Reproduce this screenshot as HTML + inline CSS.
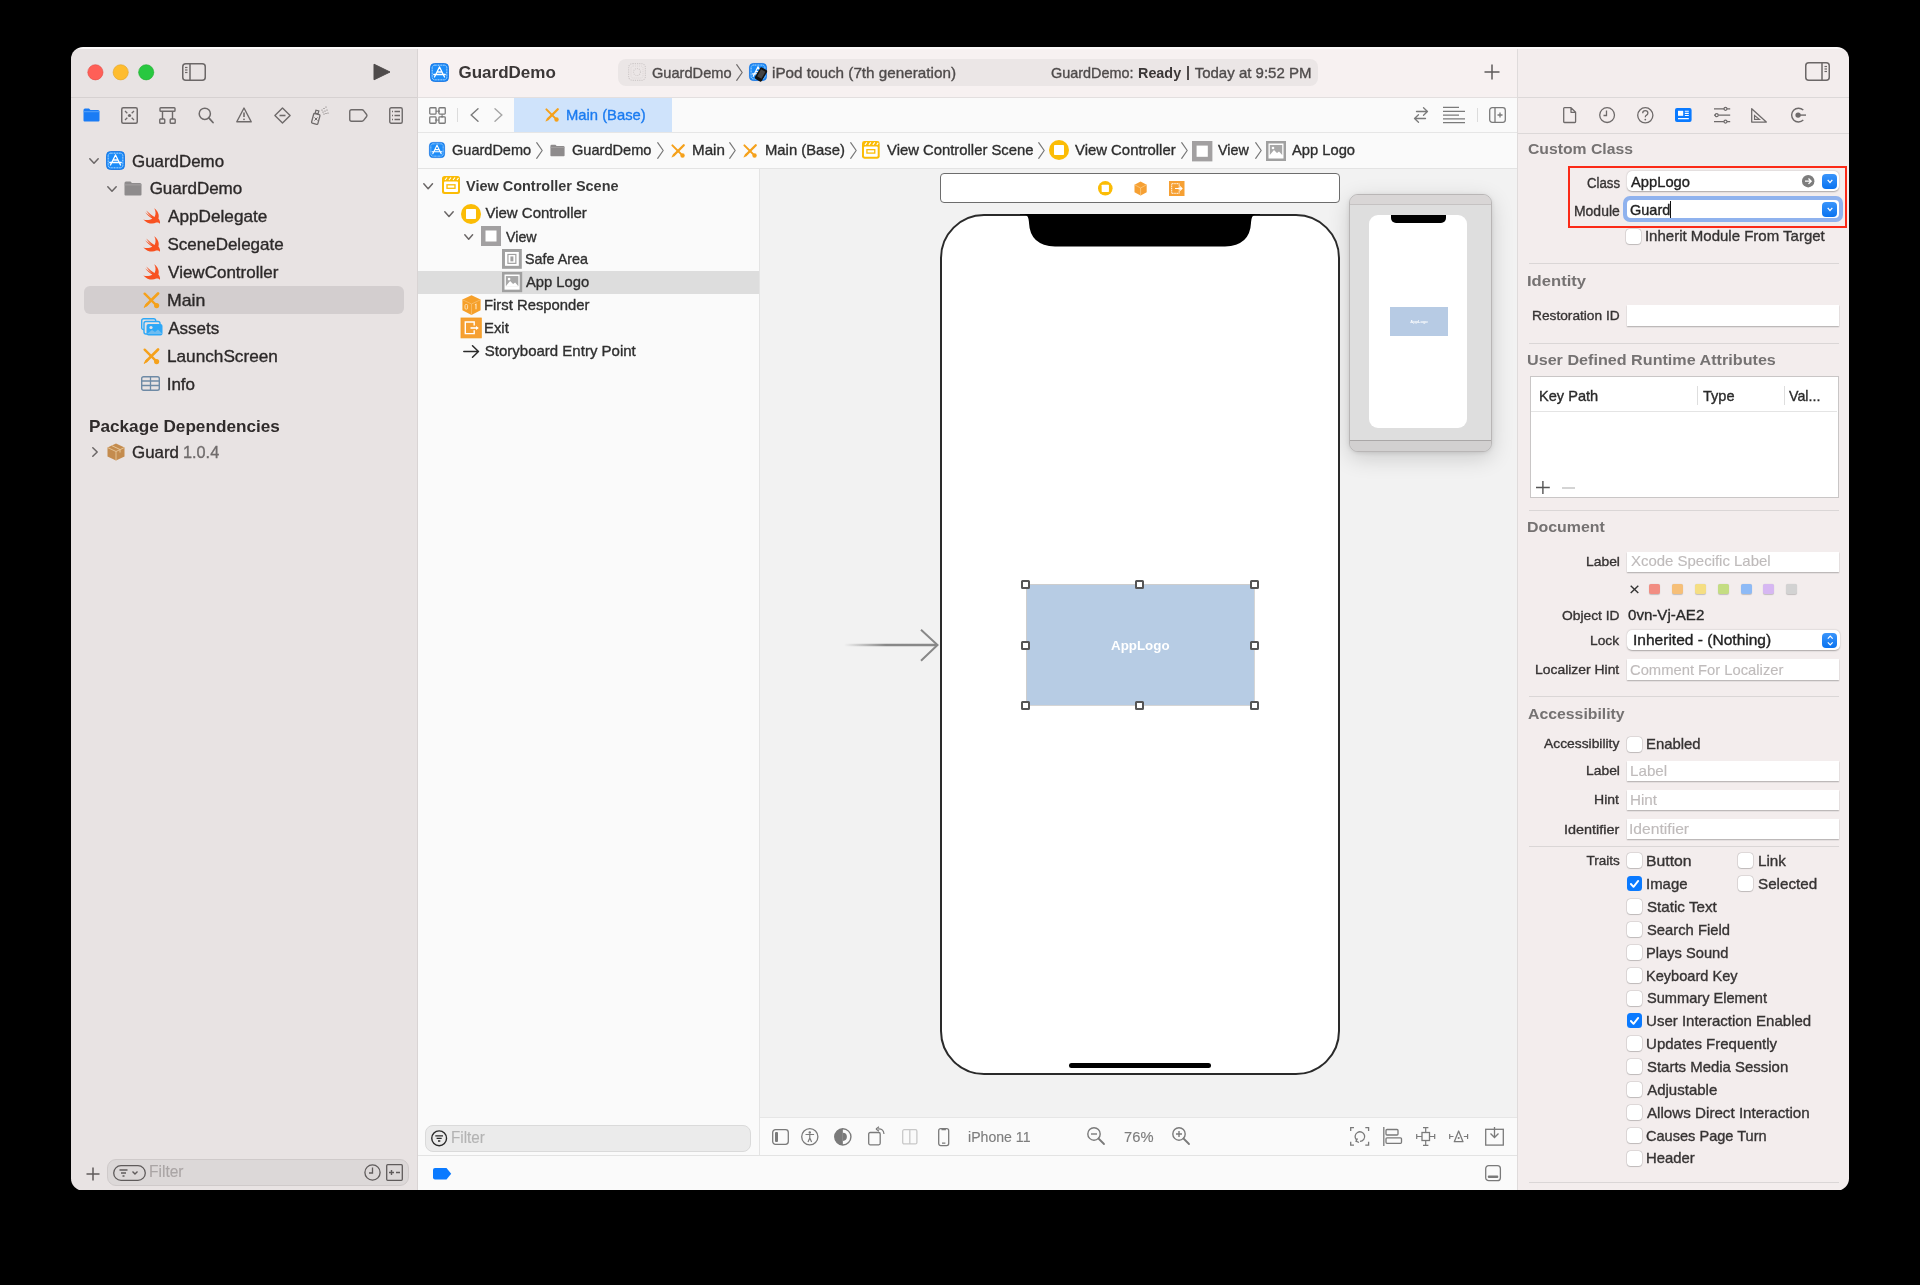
<!DOCTYPE html>
<html><head><meta charset="utf-8"><style>
html,body{margin:0;padding:0;background:#000;}
body{width:1920px;height:1285px;overflow:hidden;position:relative;font-family:"Liberation Sans", sans-serif;}
#win{position:absolute;left:0;top:0;width:1920px;height:1285px;will-change:transform;clip-path:inset(47px 71px 94.5px 71px round 12px);}
svg{overflow:visible}
</style></head><body><div id="win">
<div style="position:absolute;left:71px;top:47px;width:347px;height:1143px;background:#e8e3e3"></div><div style="position:absolute;left:418px;top:47px;width:1100px;height:50px;background:#f7f1f1"></div><div style="position:absolute;left:1518px;top:47px;width:331px;height:1143px;background:#f3eded"></div><div style="position:absolute;left:418px;top:97px;width:1100px;height:1093px;background:#fafafa"></div><div style="position:absolute;left:760px;top:168px;width:758px;height:950px;background:#f2f2f2"></div><div style="position:absolute;left:71px;top:97px;width:347px;height:1px;background:#d6d1d1"></div><div style="position:absolute;left:418px;top:97px;width:1100px;height:1px;background:#e3dfdf"></div><div style="position:absolute;left:1518px;top:97px;width:331px;height:1px;background:#dcd8d8"></div><div style="position:absolute;left:418px;top:132px;width:1100px;height:1px;background:#e6e6e6"></div><div style="position:absolute;left:1518px;top:133px;width:331px;height:1px;background:#dcd8d8"></div><div style="position:absolute;left:418px;top:168px;width:1100px;height:1px;background:#e3e3e3"></div><div style="position:absolute;left:759px;top:168px;width:1px;height:987px;background:#e4e4e4"></div><div style="position:absolute;left:760px;top:1117px;width:758px;height:1px;background:#e6e6e6"></div><div style="position:absolute;left:418px;top:1155px;width:1100px;height:1px;background:#e3e3e3"></div><div style="position:absolute;left:417px;top:47px;width:1px;height:1143px;background:#d9d4d4"></div><div style="position:absolute;left:1517px;top:47px;width:1px;height:1143px;background:#dfdbdb"></div><svg style="position:absolute;left:80px;top:57px;" width="80" height="30" viewBox="0 0 80 30"><circle cx="15.4" cy="15.3" r="7.6" fill="#ff5f57" stroke="#e2463f" stroke-width="0.6"/><circle cx="40.7" cy="15.3" r="7.6" fill="#febc2e" stroke="#e1a325" stroke-width="0.6"/><circle cx="66.2" cy="15.3" r="7.6" fill="#28c840" stroke="#1dad2b" stroke-width="0.6"/></svg><svg style="position:absolute;left:182px;top:63px;" width="24" height="18" viewBox="0 0 24 18"><rect x="0.75" y="0.75" width="22.5" height="16.5" rx="3" fill="none" stroke="#6b6767" stroke-width="1.5"/><line x1="8" y1="1" x2="8" y2="17" stroke="#6b6767" stroke-width="1.5"/><line x1="3" y1="4.5" x2="5.5" y2="4.5" stroke="#6b6767" stroke-width="1.2"/><line x1="3" y1="7" x2="5.5" y2="7" stroke="#6b6767" stroke-width="1.2"/><line x1="3" y1="9.5" x2="5.5" y2="9.5" stroke="#6b6767" stroke-width="1.2"/></svg><svg style="position:absolute;left:373px;top:63px;" width="18" height="18" viewBox="0 0 18 18"><path d="M1 1.2 L17 9 L1 16.8 Z" fill="#4f4b4b" stroke="#4f4b4b" stroke-width="1" stroke-linejoin="round"/></svg><svg style="position:absolute;left:83px;top:108px;" width="17" height="14" viewBox="0 0 17 14"><path d="M0.5 2 Q0.5 0.5 2 0.5 L6 0.5 L7.5 2 L15 2 Q16.5 2 16.5 3.5 L16.5 12.5 Q16.5 13.5 15.5 13.5 L1.5 13.5 Q0.5 13.5 0.5 12.5 Z" fill="#1a7cf5"/><rect x="0.5" y="3.2" width="16" height="1" fill="#5aa3f8"/></svg><svg style="position:absolute;left:121px;top:107px;" width="17" height="17" viewBox="0 0 17 17"><rect x="0.75" y="0.75" width="15.5" height="15.5" rx="1.5" fill="none" stroke="#6e6a6a" stroke-width="1.5"/><circle cx="8.5" cy="8.5" r="1.6" fill="#6e6a6a"/><path d="M4 4 L6.3 6.3 M13 4 L10.7 6.3 M4 13 L6.3 10.7 M13 13 L10.7 10.7" stroke="#6e6a6a" stroke-width="1.3"/></svg><svg style="position:absolute;left:159px;top:107px;" width="17" height="17" viewBox="0 0 17 17"><rect x="1" y="0.75" width="15" height="3.5" rx="0.8" fill="none" stroke="#6e6a6a" stroke-width="1.4"/><path d="M3.5 4.3 L3.5 12 M13.5 4.3 L13.5 12" stroke="#6e6a6a" stroke-width="1.4"/><rect x="0.75" y="12" width="5" height="4.2" rx="0.8" fill="none" stroke="#6e6a6a" stroke-width="1.4"/><rect x="11.2" y="12" width="5" height="4.2" rx="0.8" fill="none" stroke="#6e6a6a" stroke-width="1.4"/></svg><svg style="position:absolute;left:198px;top:107px;" width="16" height="17" viewBox="0 0 16 17"><circle cx="6.8" cy="6.8" r="5.6" fill="none" stroke="#6e6a6a" stroke-width="1.5"/><path d="M10.8 10.8 L15 15.5" stroke="#6e6a6a" stroke-width="1.8" stroke-linecap="round"/></svg><svg style="position:absolute;left:236px;top:107px;" width="16" height="16" viewBox="0 0 16 16"><path d="M8 1 L15.2 14.8 L0.8 14.8 Z" fill="none" stroke="#6e6a6a" stroke-width="1.4" stroke-linejoin="round"/><path d="M8 5.5 L8 10" stroke="#6e6a6a" stroke-width="1.6"/><circle cx="8" cy="12.3" r="0.9" fill="#6e6a6a"/></svg><svg style="position:absolute;left:274px;top:107px;" width="17" height="17" viewBox="0 0 17 17"><path d="M8.5 0.9 L16.1 8.5 L8.5 16.1 L0.9 8.5 Z" fill="none" stroke="#6e6a6a" stroke-width="1.4" stroke-linejoin="round"/><path d="M5.5 8.5 L11.5 8.5" stroke="#6e6a6a" stroke-width="1.6"/></svg><svg style="position:absolute;left:311px;top:106px;" width="19" height="19" viewBox="0 0 19 19"><rect x="1.5" y="8" width="6.5" height="10" rx="1" transform="rotate(15 5 13)" fill="none" stroke="#6e6a6a" stroke-width="1.3"/><rect x="4.5" y="4.5" width="3" height="3" transform="rotate(15 6 6)" fill="none" stroke="#6e6a6a" stroke-width="1.2"/><path d="M3.5 11.5 L6.5 14.5 M6.5 11.5 L3.5 14.5" stroke="#6e6a6a" stroke-width="1"/><g fill="#6e6a6a"><circle cx="11" cy="4" r="0.6"/><circle cx="13" cy="2.5" r="0.6"/><circle cx="15" cy="1" r="0.6"/><circle cx="12" cy="6" r="0.6"/><circle cx="14" cy="5" r="0.6"/><circle cx="16" cy="4" r="0.6"/><circle cx="13" cy="8" r="0.6"/><circle cx="15" cy="7.5" r="0.6"/><circle cx="17" cy="7" r="0.6"/></g></svg><svg style="position:absolute;left:349px;top:109px;" width="19" height="13" viewBox="0 0 19 13"><path d="M2.5 0.75 L13 0.75 Q14 0.75 14.8 1.8 L17.6 5.5 Q18.3 6.5 17.6 7.5 L14.8 11.2 Q14 12.25 13 12.25 L2.5 12.25 Q0.75 12.25 0.75 10.5 L0.75 2.5 Q0.75 0.75 2.5 0.75 Z" fill="none" stroke="#6e6a6a" stroke-width="1.4" stroke-linejoin="round"/></svg><svg style="position:absolute;left:389px;top:107px;" width="14" height="17" viewBox="0 0 14 17"><rect x="0.75" y="0.75" width="12.5" height="15.5" rx="1.5" fill="none" stroke="#6e6a6a" stroke-width="1.4"/><path d="M3 4.5 L4 4.5 M5.5 4.5 L11 4.5 M3 8.5 L4 8.5 M5.5 8.5 L11 8.5 M3 12.5 L4 12.5 M5.5 12.5 L11 12.5" stroke="#6e6a6a" stroke-width="1.4"/></svg><svg style="position:absolute;left:89px;top:158px;" width="10" height="6" viewBox="0 0 10 6"><path d="M0.8 0.8 L5.0 5.2 L9.2 0.8" fill="none" stroke="#6a6666" stroke-width="1.5" stroke-linecap="round" stroke-linejoin="round"/></svg><svg style="position:absolute;left:106px;top:151px;" width="19" height="19" viewBox="0 0 19 19"><g transform="scale(1.0)"><rect x="0.5" y="0.5" width="18" height="18" rx="4" fill="#1d8cf8" stroke="#0f6fe0" stroke-width="0.8"/><rect x="2.2" y="2.2" width="14.6" height="14.6" rx="2.6" fill="none" stroke="#fff" stroke-width="0.7" stroke-dasharray="1 0.6"/><path d="M9.5 4 L4.5 14 M9.5 4 L14.5 14 M3.8 11.5 L15.2 11.5 M7 9 L12 9" stroke="#fff" stroke-width="1.3" stroke-linecap="round" fill="none"/></g></svg><div style="position:absolute;left:131.85px;top:152.51px;font-size:17px;line-height:17px;font-weight:400;color:#2c2929;white-space:pre;-webkit-text-stroke:0.35px currentColor;transform:scaleX(0.9941);transform-origin:0 0;z-index:5">GuardDemo</div><svg style="position:absolute;left:107px;top:186px;" width="10" height="6" viewBox="0 0 10 6"><path d="M0.8 0.8 L5.0 5.2 L9.2 0.8" fill="none" stroke="#6a6666" stroke-width="1.5" stroke-linecap="round" stroke-linejoin="round"/></svg><svg style="position:absolute;left:124px;top:181px;" width="18" height="15" viewBox="0 0 18 15"><path d="M0.5 2 Q0.5 0.5 2 0.5 L6.5 0.5 L8 2 L16 2 Q17.5 2 17.5 3.5 L17.5 13.5 Q17.5 14.5 16.5 14.5 L1.5 14.5 Q0.5 14.5 0.5 13.5 Z" fill="#8e8b8c"/><rect x="0.5" y="3.5" width="17" height="0.8" fill="#a9a6a7"/></svg><div style="position:absolute;left:149.65px;top:179.51px;font-size:17px;line-height:17px;font-weight:400;color:#2c2929;white-space:pre;-webkit-text-stroke:0.35px currentColor;z-index:5">GuardDemo</div><svg style="position:absolute;left:142.5px;top:207.9px;" width="18" height="16" viewBox="0 0 18 16"><path d="M11.2 0.3 C15 3 16.6 7.2 15.4 10.6 C16.8 12.3 17.4 14.2 16.9 15.7 C15.9 14.5 14.4 14.1 13.2 14.6 C9.4 16.6 4.2 15.6 0.3 11.4 C3.6 12.4 7 12 9.3 10.4 C7 9.4 4.2 6.8 2.2 4.2 C4.8 6.4 7.3 8.1 8.8 8.9 C6.5 7 4.3 4.5 3.2 2.5 C6.2 5.3 9.7 8 11.6 9.1 C13.1 6.1 12.8 3 11.2 0.3 Z" fill="#f85222"/></svg><div style="position:absolute;left:168.20px;top:207.51px;font-size:17px;line-height:17px;font-weight:400;color:#2c2929;white-space:pre;-webkit-text-stroke:0.35px currentColor;transform:scaleX(1.0105);transform-origin:0 0;z-index:5">AppDelegate</div><svg style="position:absolute;left:142.5px;top:235.9px;" width="18" height="16" viewBox="0 0 18 16"><path d="M11.2 0.3 C15 3 16.6 7.2 15.4 10.6 C16.8 12.3 17.4 14.2 16.9 15.7 C15.9 14.5 14.4 14.1 13.2 14.6 C9.4 16.6 4.2 15.6 0.3 11.4 C3.6 12.4 7 12 9.3 10.4 C7 9.4 4.2 6.8 2.2 4.2 C4.8 6.4 7.3 8.1 8.8 8.9 C6.5 7 4.3 4.5 3.2 2.5 C6.2 5.3 9.7 8 11.6 9.1 C13.1 6.1 12.8 3 11.2 0.3 Z" fill="#f85222"/></svg><div style="position:absolute;left:167.44px;top:235.51px;font-size:17px;line-height:17px;font-weight:400;color:#2c2929;white-space:pre;-webkit-text-stroke:0.35px currentColor;z-index:5">SceneDelegate</div><svg style="position:absolute;left:142.5px;top:263.9px;" width="18" height="16" viewBox="0 0 18 16"><path d="M11.2 0.3 C15 3 16.6 7.2 15.4 10.6 C16.8 12.3 17.4 14.2 16.9 15.7 C15.9 14.5 14.4 14.1 13.2 14.6 C9.4 16.6 4.2 15.6 0.3 11.4 C3.6 12.4 7 12 9.3 10.4 C7 9.4 4.2 6.8 2.2 4.2 C4.8 6.4 7.3 8.1 8.8 8.9 C6.5 7 4.3 4.5 3.2 2.5 C6.2 5.3 9.7 8 11.6 9.1 C13.1 6.1 12.8 3 11.2 0.3 Z" fill="#f85222"/></svg><div style="position:absolute;left:168.11px;top:263.51px;font-size:17px;line-height:17px;font-weight:400;color:#2c2929;white-space:pre;-webkit-text-stroke:0.35px currentColor;z-index:5">ViewController</div><div style="position:absolute;left:84px;top:286px;width:320px;height:28px;background:#d3cecf;border-radius:6px"></div><svg style="position:absolute;left:143px;top:292px;" width="16.5" height="16.5" viewBox="0 0 16.5 16.5"><g transform="scale(1.03125)"><path d="M1.6 1.6 L11.6 11.6" stroke="#f5a11b" stroke-width="2.3" stroke-linecap="round"/><circle cx="13.2" cy="13.2" r="2.5" fill="#f5a11b"/><path d="M14.6 1.4 L3 13" stroke="#f5a11b" stroke-width="2.6" stroke-linecap="round"/><path d="M3.9 11.2 L1 15 L4.8 12.1 Z" fill="#f5a11b" stroke="#f5a11b" stroke-width="1"/></g></svg><div style="position:absolute;left:166.79px;top:292.21px;font-size:17px;line-height:17px;font-weight:400;color:#2c2929;white-space:pre;-webkit-text-stroke:0.35px currentColor;transform:scaleX(1.0399);transform-origin:0 0;z-index:5">Main</div><svg style="position:absolute;left:141px;top:318px;" width="22" height="18" viewBox="0 0 22 18"><rect x="0.7" y="0.7" width="14" height="11" rx="2" fill="none" stroke="#2ea8f7" stroke-width="1.4"/><rect x="3" y="3.5" width="16" height="12.5" rx="2" fill="#e8e3e3" stroke="#2ea8f7" stroke-width="1.4"/><rect x="5.5" y="6" width="16" height="11.5" rx="2" fill="#2ea8f7"/><circle cx="10" cy="9.5" r="1.6" fill="#e8e3e3"/><path d="M6 16 L11 12 L14 14 L17 11.5 L21.5 16 Z" fill="#e8e3e3" opacity="0.35"/></svg><div style="position:absolute;left:168.20px;top:319.61px;font-size:17px;line-height:17px;font-weight:400;color:#2c2929;white-space:pre;-webkit-text-stroke:0.35px currentColor;z-index:5">Assets</div><svg style="position:absolute;left:143px;top:348px;" width="16.5" height="16.5" viewBox="0 0 16.5 16.5"><g transform="scale(1.03125)"><path d="M1.6 1.6 L11.6 11.6" stroke="#f5a11b" stroke-width="2.3" stroke-linecap="round"/><circle cx="13.2" cy="13.2" r="2.5" fill="#f5a11b"/><path d="M14.6 1.4 L3 13" stroke="#f5a11b" stroke-width="2.6" stroke-linecap="round"/><path d="M3.9 11.2 L1 15 L4.8 12.1 Z" fill="#f5a11b" stroke="#f5a11b" stroke-width="1"/></g></svg><div style="position:absolute;left:166.82px;top:347.51px;font-size:17px;line-height:17px;font-weight:400;color:#2c2929;white-space:pre;-webkit-text-stroke:0.35px currentColor;transform:scaleX(1.0113);transform-origin:0 0;z-index:5">LaunchScreen</div><svg style="position:absolute;left:141px;top:376px;" width="19" height="15" viewBox="0 0 19 15"><rect x="0.7" y="0.7" width="17.6" height="13.6" rx="1.8" fill="none" stroke="#6e8aa5" stroke-width="1.4"/><path d="M1 5 L18 5 M1 9.5 L18 9.5 M9.5 1 L9.5 14" stroke="#6e8aa5" stroke-width="1.3"/></svg><div style="position:absolute;left:166.67px;top:375.91px;font-size:17px;line-height:17px;font-weight:400;color:#2c2929;white-space:pre;-webkit-text-stroke:0.35px currentColor;z-index:5">Info</div><div style="position:absolute;left:88.58px;top:417.91px;font-size:17px;line-height:17px;font-weight:700;color:#2f2b2b;white-space:pre;transform:scaleX(1.0098);transform-origin:0 0;z-index:5">Package Dependencies</div><svg style="position:absolute;left:92px;top:447px;" width="6" height="10" viewBox="0 0 6 10"><path d="M0.8 0.8 L5.2 5.0 L0.8 9.2" fill="none" stroke="#6a6666" stroke-width="1.5" stroke-linecap="round" stroke-linejoin="round"/></svg><svg style="position:absolute;left:107px;top:443px;" width="18" height="18" viewBox="0 0 18 18"><path d="M9 0.5 L17.5 4.5 L17.5 13.5 L9 17.5 L0.5 13.5 L0.5 4.5 Z" fill="#c48c4e"/><path d="M0.5 4.5 L9 8.5 L17.5 4.5 M9 8.5 L9 17.5" stroke="#e8c79a" stroke-width="0.9" fill="none"/><path d="M4.5 2.5 L13 6.5 L13 9.5" stroke="#e8c79a" stroke-width="1" fill="none"/></svg><div style="position:absolute;left:131.96px;top:443.61px;font-size:17px;line-height:17px;font-weight:400;color:#2c2929;white-space:pre;-webkit-text-stroke:0.35px currentColor;transform:scaleX(0.9933);transform-origin:0 0;z-index:5">Guard</div><div style="position:absolute;left:183.28px;top:443.91px;font-size:17px;line-height:17px;font-weight:400;color:#706c6c;white-space:pre;-webkit-text-stroke:0.35px currentColor;transform:scaleX(0.9573);transform-origin:0 0;z-index:5">1.0.4</div><svg style="position:absolute;left:86px;top:1167px;" width="14" height="14" viewBox="0 0 14 14"><path d="M7 0.5 L7 13.5 M0.5 7 L13.5 7" stroke="#5f5b5b" stroke-width="1.5"/></svg><div style="position:absolute;left:107px;top:1159px;width:302px;height:27px;background:#dcd8d8;border:1px solid #cfcaca;border-radius:9px;box-sizing:border-box"></div><svg style="position:absolute;left:113px;top:1165px;" width="33" height="16" viewBox="0 0 33 16"><rect x="0.7" y="0.7" width="31.6" height="14.6" rx="7.3" fill="none" stroke="#5f5b5b" stroke-width="1.3"/><path d="M6.5 5 L14.5 5 M8 8 L13 8 M9.5 11 L11.5 11" stroke="#5f5b5b" stroke-width="1.3"/><path d="M19.5 6.5 L22 9 L24.5 6.5" fill="none" stroke="#5f5b5b" stroke-width="1.4"/></svg><div style="position:absolute;left:148.86px;top:1164.15px;font-size:16px;line-height:16px;font-weight:400;color:#aaa5a5;white-space:pre;-webkit-text-stroke:0.15px currentColor;transform:scaleX(0.9706);transform-origin:0 0;z-index:5">Filter</div><svg style="position:absolute;left:364px;top:1164px;" width="17" height="17" viewBox="0 0 17 17"><circle cx="8.5" cy="8.5" r="7.6" fill="none" stroke="#5f5b5b" stroke-width="1.3"/><path d="M8.5 3.5 L8.5 9 L5 9" fill="none" stroke="#5f5b5b" stroke-width="1.3"/></svg><svg style="position:absolute;left:386px;top:1164px;" width="17" height="17" viewBox="0 0 17 17"><rect x="0.7" y="0.7" width="15.6" height="15.6" rx="1" fill="none" stroke="#5f5b5b" stroke-width="1.3"/><path d="M3 8.5 L8 8.5 M5.5 6 L5.5 11 M10 8.5 L14 8.5" stroke="#5f5b5b" stroke-width="1.4"/></svg><svg style="position:absolute;left:430px;top:63px;" width="19" height="19" viewBox="0 0 19 19"><g transform="scale(1.0)"><rect x="0.5" y="0.5" width="18" height="18" rx="4" fill="#1d8cf8" stroke="#0f6fe0" stroke-width="0.8"/><rect x="2.2" y="2.2" width="14.6" height="14.6" rx="2.6" fill="none" stroke="#fff" stroke-width="0.7" stroke-dasharray="1 0.6"/><path d="M9.5 4 L4.5 14 M9.5 4 L14.5 14 M3.8 11.5 L15.2 11.5 M7 9 L12 9" stroke="#fff" stroke-width="1.3" stroke-linecap="round" fill="none"/></g></svg><div style="position:absolute;left:458.52px;top:64.31px;font-size:17px;line-height:17px;font-weight:700;color:#3b3737;white-space:pre;z-index:5">GuardDemo</div><div style="position:absolute;left:618px;top:59px;width:700px;height:27px;background:#ebe6e6;border-radius:8px"></div><svg style="position:absolute;left:628px;top:63px;" width="18" height="18" viewBox="0 0 18 18"><rect x="0.6" y="0.6" width="16.8" height="16.8" rx="4" fill="none" stroke="#cfcaca" stroke-width="1.1" stroke-dasharray="1.2 1"/><circle cx="9" cy="9" r="3.5" fill="none" stroke="#cfcaca" stroke-width="1.1" stroke-dasharray="1 1"/><rect x="3" y="3" width="12" height="12" rx="2" fill="none" stroke="#d8d3d3" stroke-width="0.8" stroke-dasharray="1 1"/></svg><div style="position:absolute;left:651.97px;top:65.00px;font-size:15px;line-height:15px;font-weight:400;color:#4f4b4b;white-space:pre;-webkit-text-stroke:0.35px currentColor;transform:scaleX(0.9735);transform-origin:0 0;z-index:5">GuardDemo</div><svg style="position:absolute;left:736px;top:64px;" width="7" height="17" viewBox="0 0 7 17"><path d="M0.7 0.7 L6.2 8.5 L0.7 16.3" fill="none" stroke="#6f6b6b" stroke-width="1.2" stroke-linecap="round" stroke-linejoin="round"/></svg><svg style="position:absolute;left:749px;top:63px;" width="18" height="18" viewBox="0 0 18 18"><g transform="scale(0.9473684210526315)"><rect x="0.5" y="0.5" width="18" height="18" rx="4" fill="#1d8cf8" stroke="#0f6fe0" stroke-width="0.8"/><rect x="2.2" y="2.2" width="14.6" height="14.6" rx="2.6" fill="none" stroke="#fff" stroke-width="0.7" stroke-dasharray="1 0.6"/><path d="M9.5 4 L4.5 14 M9.5 4 L14.5 14 M3.8 11.5 L15.2 11.5 M7 9 L12 9" stroke="#fff" stroke-width="1.3" stroke-linecap="round" fill="none"/></g></svg><svg style="position:absolute;left:754px;top:67px;" width="14" height="16" viewBox="0 0 14 16"><rect x="3" y="1" width="8" height="13" rx="1.5" transform="rotate(30 7 7.5)" fill="#111"/><rect x="4.5" y="3" width="5" height="8" transform="rotate(30 7 7.5)" fill="#444"/></svg><div style="position:absolute;left:771.91px;top:65.00px;font-size:15px;line-height:15px;font-weight:400;color:#4f4b4b;white-space:pre;-webkit-text-stroke:0.35px currentColor;transform:scaleX(1.0166);transform-origin:0 0;z-index:5">iPod touch (7th generation)</div><div style="position:absolute;left:1050.78px;top:65.00px;font-size:15px;line-height:15px;font-weight:400;color:#4f4b4b;white-space:pre;-webkit-text-stroke:0.35px currentColor;transform:scaleX(0.9609);transform-origin:0 0;z-index:5">GuardDemo:</div><div style="position:absolute;left:1137.97px;top:65.00px;font-size:15px;line-height:15px;font-weight:700;color:#3b3737;white-space:pre;transform:scaleX(0.9579);transform-origin:0 0;z-index:5">Ready</div><div style="position:absolute;left:1187.2px;top:65.5px;width:1.4px;height:14px;background:#4f4b4b"></div><div style="position:absolute;left:1194.70px;top:65.00px;font-size:15px;line-height:15px;font-weight:400;color:#4f4b4b;white-space:pre;-webkit-text-stroke:0.35px currentColor;z-index:5">Today at 9:52 PM</div><svg style="position:absolute;left:1484px;top:64px;" width="16" height="16" viewBox="0 0 16 16"><path d="M8 0.5 L8 15.5 M0.5 8 L15.5 8" stroke="#5f5b5b" stroke-width="1.5"/></svg><svg style="position:absolute;left:1805px;top:62px;" width="25" height="19" viewBox="0 0 25 19"><rect x="0.75" y="0.75" width="23.5" height="17.5" rx="3" fill="none" stroke="#6b6767" stroke-width="1.5"/><line x1="17" y1="1" x2="17" y2="18" stroke="#6b6767" stroke-width="1.5"/><line x1="19.5" y1="4.5" x2="22" y2="4.5" stroke="#6b6767" stroke-width="1.2"/><line x1="19.5" y1="7" x2="22" y2="7" stroke="#6b6767" stroke-width="1.2"/><line x1="19.5" y1="9.5" x2="22" y2="9.5" stroke="#6b6767" stroke-width="1.2"/></svg><svg style="position:absolute;left:429px;top:107px;" width="17" height="17" viewBox="0 0 17 17"><rect x="0.75" y="0.75" width="6.3" height="6.3" rx="0.8" fill="none" stroke="#7a7a7a" stroke-width="1.3"/><rect x="9.95" y="0.75" width="6.3" height="6.3" rx="0.8" fill="none" stroke="#7a7a7a" stroke-width="1.3"/><rect x="0.75" y="9.95" width="6.3" height="6.3" rx="0.8" fill="none" stroke="#7a7a7a" stroke-width="1.3"/><rect x="9.95" y="9.95" width="6.3" height="6.3" rx="0.8" fill="none" stroke="#7a7a7a" stroke-width="1.3"/><path d="M7 4.2 L10.5 4.2 M9.2 3 L10.5 4.2 L9.2 5.4 M13.1 7 L13.1 10.3 M11.9 9 L13.1 10.3 L14.3 9 M10 13.1 L6.5 13.1 M7.8 11.9 L6.5 13.1 L7.8 14.3" fill="none" stroke="#7a7a7a" stroke-width="1"/></svg><div style="position:absolute;left:457px;top:108px;width:1px;height:14px;background:#dcdcdc"></div><svg style="position:absolute;left:470px;top:108px;" width="9" height="14" viewBox="0 0 9 14"><path d="M8 0.8 L1.2 7 L8 13.2" fill="none" stroke="#7a7a7a" stroke-width="1.4" stroke-linecap="round"/></svg><svg style="position:absolute;left:494px;top:108px;" width="9" height="14" viewBox="0 0 9 14"><path d="M1 0.8 L7.8 7 L1 13.2" fill="none" stroke="#a5a5a5" stroke-width="1.4" stroke-linecap="round"/></svg><div style="position:absolute;left:514px;top:98px;width:158px;height:34px;background:#cfe3fb"></div><svg style="position:absolute;left:545px;top:108px;" width="14" height="14" viewBox="0 0 14 14"><g transform="scale(0.875)"><path d="M1.6 1.6 L11.6 11.6" stroke="#f5a11b" stroke-width="2.3" stroke-linecap="round"/><circle cx="13.2" cy="13.2" r="2.5" fill="#f5a11b"/><path d="M14.6 1.4 L3 13" stroke="#f5a11b" stroke-width="2.6" stroke-linecap="round"/><path d="M3.9 11.2 L1 15 L4.8 12.1 Z" fill="#f5a11b" stroke="#f5a11b" stroke-width="1"/></g></svg><div style="position:absolute;left:565.72px;top:107.30px;font-size:15px;line-height:15px;font-weight:400;color:#1b7bf0;white-space:pre;-webkit-text-stroke:0.35px currentColor;transform:scaleX(0.9854);transform-origin:0 0;z-index:5">Main (Base)</div><svg style="position:absolute;left:1413px;top:107px;" width="16" height="16" viewBox="0 0 16 16"><path d="M3.5 4.5 L14.5 4.5 M10.5 0.8 L14.5 4.5 L10.5 8.2 M12.5 11.5 L1.5 11.5 M5.5 7.8 L1.5 11.5 L5.5 15.2" fill="none" stroke="#7a7a7a" stroke-width="1.3" stroke-linecap="round" stroke-linejoin="round"/></svg><svg style="position:absolute;left:1442px;top:106px;" width="24" height="18" viewBox="0 0 24 18"><path d="M1 1.3 L17 1.3 M1 5.4 L23 5.4 M1 9.1 L17 9.1 M1 12.9 L23 12.9 M1 16.6 L23 16.6" stroke="#7a7a7a" stroke-width="1.3"/></svg><div style="position:absolute;left:1477px;top:108px;width:1px;height:14px;background:#dcdcdc"></div><svg style="position:absolute;left:1489px;top:107px;" width="17" height="16" viewBox="0 0 17 16"><rect x="0.7" y="0.7" width="15.6" height="14.6" rx="2.5" fill="none" stroke="#7a7a7a" stroke-width="1.3"/><path d="M6 1 L6 15 M8.5 8 L13.5 8 M11 5.5 L11 10.5" stroke="#7a7a7a" stroke-width="1.3"/></svg><svg style="position:absolute;left:429px;top:142px;" width="16" height="16" viewBox="0 0 16 16"><g transform="scale(0.8421052631578947)"><rect x="0.5" y="0.5" width="18" height="18" rx="4" fill="#1d8cf8" stroke="#0f6fe0" stroke-width="0.8"/><rect x="2.2" y="2.2" width="14.6" height="14.6" rx="2.6" fill="none" stroke="#fff" stroke-width="0.7" stroke-dasharray="1 0.6"/><path d="M9.5 4 L4.5 14 M9.5 4 L14.5 14 M3.8 11.5 L15.2 11.5 M7 9 L12 9" stroke="#fff" stroke-width="1.3" stroke-linecap="round" fill="none"/></g></svg><div style="position:absolute;left:452.07px;top:141.70px;font-size:15px;line-height:15px;font-weight:400;color:#2e2e2e;white-space:pre;-webkit-text-stroke:0.35px currentColor;transform:scaleX(0.9686);transform-origin:0 0;z-index:5">GuardDemo</div><svg style="position:absolute;left:536px;top:142px;" width="7" height="17" viewBox="0 0 7 17"><path d="M0.7 0.7 L6.2 8.5 L0.7 16.3" fill="none" stroke="#777" stroke-width="1.2" stroke-linecap="round" stroke-linejoin="round"/></svg><svg style="position:absolute;left:550px;top:144px;" width="15" height="13" viewBox="0 0 18 15"><path d="M0.5 2 Q0.5 0.5 2 0.5 L6.5 0.5 L8 2 L16 2 Q17.5 2 17.5 3.5 L17.5 13.5 Q17.5 14.5 16.5 14.5 L1.5 14.5 Q0.5 14.5 0.5 13.5 Z" fill="#8e8b8c"/><rect x="0.5" y="3.5" width="17" height="0.8" fill="#a9a6a7"/></svg><div style="position:absolute;left:572.37px;top:141.70px;font-size:15px;line-height:15px;font-weight:400;color:#2e2e2e;white-space:pre;-webkit-text-stroke:0.35px currentColor;transform:scaleX(0.9723);transform-origin:0 0;z-index:5">GuardDemo</div><svg style="position:absolute;left:657px;top:142px;" width="7" height="17" viewBox="0 0 7 17"><path d="M0.7 0.7 L6.2 8.5 L0.7 16.3" fill="none" stroke="#777" stroke-width="1.2" stroke-linecap="round" stroke-linejoin="round"/></svg><svg style="position:absolute;left:671px;top:144px;" width="14" height="14" viewBox="0 0 14 14"><g transform="scale(0.875)"><path d="M1.6 1.6 L11.6 11.6" stroke="#f5a11b" stroke-width="2.3" stroke-linecap="round"/><circle cx="13.2" cy="13.2" r="2.5" fill="#f5a11b"/><path d="M14.6 1.4 L3 13" stroke="#f5a11b" stroke-width="2.6" stroke-linecap="round"/><path d="M3.9 11.2 L1 15 L4.8 12.1 Z" fill="#f5a11b" stroke="#f5a11b" stroke-width="1"/></g></svg><div style="position:absolute;left:692.39px;top:141.70px;font-size:15px;line-height:15px;font-weight:400;color:#2e2e2e;white-space:pre;-webkit-text-stroke:0.35px currentColor;transform:scaleX(1.0107);transform-origin:0 0;z-index:5">Main</div><svg style="position:absolute;left:729px;top:142px;" width="7" height="17" viewBox="0 0 7 17"><path d="M0.7 0.7 L6.2 8.5 L0.7 16.3" fill="none" stroke="#777" stroke-width="1.2" stroke-linecap="round" stroke-linejoin="round"/></svg><svg style="position:absolute;left:743px;top:144px;" width="14" height="14" viewBox="0 0 14 14"><g transform="scale(0.875)"><path d="M1.6 1.6 L11.6 11.6" stroke="#f5a11b" stroke-width="2.3" stroke-linecap="round"/><circle cx="13.2" cy="13.2" r="2.5" fill="#f5a11b"/><path d="M14.6 1.4 L3 13" stroke="#f5a11b" stroke-width="2.6" stroke-linecap="round"/><path d="M3.9 11.2 L1 15 L4.8 12.1 Z" fill="#f5a11b" stroke="#f5a11b" stroke-width="1"/></g></svg><div style="position:absolute;left:765.01px;top:141.70px;font-size:15px;line-height:15px;font-weight:400;color:#2e2e2e;white-space:pre;-webkit-text-stroke:0.35px currentColor;transform:scaleX(0.9879);transform-origin:0 0;z-index:5">Main (Base)</div><svg style="position:absolute;left:849.5px;top:142px;" width="7" height="17" viewBox="0 0 7 17"><path d="M0.7 0.7 L6.2 8.5 L0.7 16.3" fill="none" stroke="#777" stroke-width="1.2" stroke-linecap="round" stroke-linejoin="round"/></svg><svg style="position:absolute;left:862.3px;top:141px;" width="17.7" height="17.7" viewBox="0 0 17.7 17.7"><g transform="scale(0.9833333333333333)"><rect x="0" y="0" width="18" height="18" rx="2.5" fill="#fbbc05"/><rect x="2" y="5.5" width="14" height="10.5" rx="1" fill="#fff"/><path d="M3 4 L5 1.5 M7 4 L9 1.5 M11 4 L13 1.5 M15 4 L16.5 2" stroke="#fff" stroke-width="1.2"/><rect x="5" y="8.8" width="8" height="3.5" fill="none" stroke="#fbbc05" stroke-width="1.3"/></g></svg><div style="position:absolute;left:886.83px;top:141.70px;font-size:15px;line-height:15px;font-weight:400;color:#2e2e2e;white-space:pre;-webkit-text-stroke:0.35px currentColor;transform:scaleX(0.9893);transform-origin:0 0;z-index:5">View Controller Scene</div><svg style="position:absolute;left:1037.5px;top:142px;" width="7" height="17" viewBox="0 0 7 17"><path d="M0.7 0.7 L6.2 8.5 L0.7 16.3" fill="none" stroke="#777" stroke-width="1.2" stroke-linecap="round" stroke-linejoin="round"/></svg><svg style="position:absolute;left:1049.1px;top:140.2px;" width="20" height="20" viewBox="0 0 20 20"><g transform="scale(1.0)"><circle cx="10" cy="10" r="10" fill="#fbbc05"/><rect x="5" y="5" width="10" height="10" rx="0.8" fill="#fff"/></g></svg><div style="position:absolute;left:1075.13px;top:141.70px;font-size:15px;line-height:15px;font-weight:400;color:#2e2e2e;white-space:pre;-webkit-text-stroke:0.35px currentColor;transform:scaleX(0.9921);transform-origin:0 0;z-index:5">View Controller</div><svg style="position:absolute;left:1181px;top:142px;" width="7" height="17" viewBox="0 0 7 17"><path d="M0.7 0.7 L6.2 8.5 L0.7 16.3" fill="none" stroke="#777" stroke-width="1.2" stroke-linecap="round" stroke-linejoin="round"/></svg><svg style="position:absolute;left:1192.2px;top:140.5px;" width="20.4" height="20.4" viewBox="0 0 20.4 20.4"><g transform="scale(1.02)"><rect x="0" y="0" width="20" height="20" fill="#a2a0a1"/><rect x="4.5" y="4.5" width="11" height="11" fill="#fff"/></g></svg><div style="position:absolute;left:1217.93px;top:141.70px;font-size:15px;line-height:15px;font-weight:400;color:#2e2e2e;white-space:pre;-webkit-text-stroke:0.35px currentColor;transform:scaleX(0.9519);transform-origin:0 0;z-index:5">View</div><svg style="position:absolute;left:1254.5px;top:142px;" width="7" height="17" viewBox="0 0 7 17"><path d="M0.7 0.7 L6.2 8.5 L0.7 16.3" fill="none" stroke="#777" stroke-width="1.2" stroke-linecap="round" stroke-linejoin="round"/></svg><svg style="position:absolute;left:1266px;top:140.5px;" width="20" height="20" viewBox="0 0 20 20"><g transform="scale(1.0)"><rect x="0" y="0" width="20" height="20" fill="#a0a0a0"/><rect x="2.5" y="2.5" width="15" height="15" fill="#fff"/><rect x="3.8" y="4" width="12.4" height="10" fill="#a8a8a8"/><path d="M3.8 14 L8 9 L11 12 L13 10.5 L16.2 14 Z" fill="#fff"/><circle cx="7" cy="7" r="1.3" fill="#fff"/></g></svg><div style="position:absolute;left:1292.10px;top:141.70px;font-size:15px;line-height:15px;font-weight:400;color:#2e2e2e;white-space:pre;-webkit-text-stroke:0.35px currentColor;transform:scaleX(0.9811);transform-origin:0 0;z-index:5">App Logo</div><svg style="position:absolute;left:423px;top:183px;" width="10.3" height="6.5" viewBox="0 0 10.3 6.5"><path d="M0.8 0.8 L5.15 5.7 L9.5 0.8" fill="none" stroke="#6a6666" stroke-width="1.5" stroke-linecap="round" stroke-linejoin="round"/></svg><svg style="position:absolute;left:442px;top:176.3px;" width="18" height="18" viewBox="0 0 18 18"><g transform="scale(1.0)"><rect x="0" y="0" width="18" height="18" rx="2.5" fill="#fbbc05"/><rect x="2" y="5.5" width="14" height="10.5" rx="1" fill="#fff"/><path d="M3 4 L5 1.5 M7 4 L9 1.5 M11 4 L13 1.5 M15 4 L16.5 2" stroke="#fff" stroke-width="1.2"/><rect x="5" y="8.8" width="8" height="3.5" fill="none" stroke="#fbbc05" stroke-width="1.3"/></g></svg><div style="position:absolute;left:465.68px;top:177.70px;font-size:15px;line-height:15px;font-weight:700;color:#3a3a3a;white-space:pre;transform:scaleX(0.9646);transform-origin:0 0;z-index:5">View Controller Scene</div><svg style="position:absolute;left:443.6px;top:211px;" width="10" height="6.3" viewBox="0 0 10 6.3"><path d="M0.8 0.8 L5.0 5.5 L9.2 0.8" fill="none" stroke="#6a6666" stroke-width="1.5" stroke-linecap="round" stroke-linejoin="round"/></svg><svg style="position:absolute;left:461.1px;top:203.5px;" width="20" height="20" viewBox="0 0 20 20"><g transform="scale(1.0)"><circle cx="10" cy="10" r="10" fill="#fbbc05"/><rect x="5" y="5" width="10" height="10" rx="0.8" fill="#fff"/></g></svg><div style="position:absolute;left:485.42px;top:205.40px;font-size:15px;line-height:15px;font-weight:400;color:#2f2f2f;white-space:pre;-webkit-text-stroke:0.35px currentColor;z-index:5">View Controller</div><svg style="position:absolute;left:464.2px;top:234px;" width="9.4" height="6" viewBox="0 0 9.4 6"><path d="M0.8 0.8 L4.7 5.2 L8.6 0.8" fill="none" stroke="#6a6666" stroke-width="1.5" stroke-linecap="round" stroke-linejoin="round"/></svg><svg style="position:absolute;left:481.4px;top:226.3px;" width="20" height="20" viewBox="0 0 20 20"><g transform="scale(1.0)"><rect x="0" y="0" width="20" height="20" fill="#a2a0a1"/><rect x="4.5" y="4.5" width="11" height="11" fill="#fff"/></g></svg><div style="position:absolute;left:506.03px;top:228.55px;font-size:15px;line-height:15px;font-weight:400;color:#2f2f2f;white-space:pre;-webkit-text-stroke:0.35px currentColor;transform:scaleX(0.9488);transform-origin:0 0;z-index:5">View</div><svg style="position:absolute;left:502px;top:249px;" width="19.8" height="19.8" viewBox="0 0 19.8 19.8"><g transform="scale(0.99)"><rect x="0" y="0" width="20" height="20" fill="#a0a0a0"/><rect x="3" y="3" width="14" height="14" fill="#fff"/><rect x="6" y="5.5" width="8" height="9" fill="none" stroke="#a0a0a0" stroke-width="1.2"/><rect x="8.5" y="7.5" width="3" height="5" fill="#a0a0a0"/></g></svg><div style="position:absolute;left:525.46px;top:251.05px;font-size:15px;line-height:15px;font-weight:400;color:#2f2f2f;white-space:pre;-webkit-text-stroke:0.35px currentColor;transform:scaleX(0.9550);transform-origin:0 0;z-index:5">Safe Area</div><div style="position:absolute;left:418px;top:271px;width:341px;height:22.5px;background:#dddddd"></div><svg style="position:absolute;left:501.8px;top:272px;" width="20.2" height="20.2" viewBox="0 0 20.2 20.2"><g transform="scale(1.01)"><rect x="0" y="0" width="20" height="20" fill="#a0a0a0"/><rect x="2.5" y="2.5" width="15" height="15" fill="#fff"/><rect x="3.8" y="4" width="12.4" height="10" fill="#a8a8a8"/><path d="M3.8 14 L8 9 L11 12 L13 10.5 L16.2 14 Z" fill="#fff"/><circle cx="7" cy="7" r="1.3" fill="#fff"/></g></svg><div style="position:absolute;left:526.40px;top:274.40px;font-size:15px;line-height:15px;font-weight:400;color:#2f2f2f;white-space:pre;-webkit-text-stroke:0.35px currentColor;transform:scaleX(0.9843);transform-origin:0 0;z-index:5">App Logo</div><svg style="position:absolute;left:461.5px;top:295px;" width="19" height="20.3" viewBox="0 0 19 20.3"><path d="M9.5 0.3 L18.6 4.6 L18.6 15.2 L9.5 19.9 L0.4 15.2 L0.4 4.6 Z" fill="#f6a02a"/><path d="M0.6 4.8 L9.5 9 L18.4 4.8 M9.5 9 L9.5 19.6" stroke="#f9c47a" stroke-width="0.7" fill="none"/><rect x="3" y="9.5" width="2.6" height="4.6" rx="1" fill="none" stroke="#fde3bd" stroke-width="0.9"/><path d="M13 9.8 L14 9.3 L14 14.3" fill="none" stroke="#fde3bd" stroke-width="1.1"/></svg><div style="position:absolute;left:484.31px;top:297.30px;font-size:15px;line-height:15px;font-weight:400;color:#2f2f2f;white-space:pre;-webkit-text-stroke:0.35px currentColor;transform:scaleX(0.9886);transform-origin:0 0;z-index:5">First Responder</div><svg style="position:absolute;left:461.1px;top:317.9px;" width="20.3" height="19.9" viewBox="0 0 20.3 19.9"><rect x="0" y="0" width="20.3" height="19.9" fill="#f6a033" stroke="#f29a1f" stroke-width="0.8"/><path d="M13.2 7.5 L13.2 4 L4.3 4 L4.3 15.6 L13.2 15.6 L13.2 12.2" fill="none" stroke="#fff" stroke-width="1.4"/><path d="M9.5 10 L16.5 10" stroke="#fff" stroke-width="1.6"/><path d="M15 8 L17.8 10 L15 12 Z" fill="#fff"/></svg><div style="position:absolute;left:484.31px;top:319.80px;font-size:15px;line-height:15px;font-weight:400;color:#2f2f2f;white-space:pre;-webkit-text-stroke:0.35px currentColor;transform:scaleX(0.9916);transform-origin:0 0;z-index:5">Exit</div><svg style="position:absolute;left:462.6px;top:344.7px;" width="16.5" height="13.1" viewBox="0 0 16.5 13.1"><path d="M0.8 6.55 L15.5 6.55 M9.5 0.8 L15.5 6.55 L9.5 12.3" fill="none" stroke="#2a2a2a" stroke-width="1.5" stroke-linecap="round" stroke-linejoin="round"/></svg><div style="position:absolute;left:484.83px;top:343.30px;font-size:15px;line-height:15px;font-weight:400;color:#2f2f2f;white-space:pre;-webkit-text-stroke:0.35px currentColor;z-index:5">Storyboard Entry Point</div><div style="position:absolute;left:424.6px;top:1125.4px;width:326.8px;height:26.8px;background:#ebebeb;border:1px solid #dadada;border-radius:8px;box-sizing:border-box"></div><svg style="position:absolute;left:430.75px;top:1130px;" width="16.3" height="16.6" viewBox="0 0 16.3 16.6"><circle cx="8.15" cy="8.3" r="7.4" fill="none" stroke="#2a2a2a" stroke-width="1.4"/><path d="M4.3 5.8 L12 5.8 M5.6 8.4 L10.7 8.4 M7 11 L9.3 11" stroke="#2a2a2a" stroke-width="1.3"/></svg><div style="position:absolute;left:451.48px;top:1130.20px;font-size:16px;line-height:16px;font-weight:400;color:#b3b3b3;white-space:pre;-webkit-text-stroke:0.15px currentColor;transform:scaleX(0.9529);transform-origin:0 0;z-index:5">Filter</div><div style="position:absolute;left:939.6px;top:173.2px;width:400.8px;height:30.3px;background:#fff;border:1.3px solid #6d6d6d;border-radius:4px;box-sizing:border-box"></div><svg style="position:absolute;left:1097.6px;top:181.4px;" width="14.6" height="14.6" viewBox="0 0 14.6 14.6"><g transform="scale(0.73)"><circle cx="10" cy="10" r="10" fill="#fbbc05"/><rect x="5" y="5" width="10" height="10" rx="0.8" fill="#fff"/></g></svg><svg style="position:absolute;left:1134px;top:181px;" width="13.2" height="15" viewBox="0 0 13.2 15"><path d="M6.6 0.5 L12.7 3.7 L12.7 11.3 L6.6 14.5 L0.5 11.3 L0.5 3.7 Z" fill="#f6a033"/><path d="M0.5 3.7 L6.6 7 L12.7 3.7 M6.6 7 L6.6 14.5" stroke="#fbd08f" stroke-width="0.7" fill="none"/></svg><svg style="position:absolute;left:1168.5px;top:181px;" width="15.5" height="15" viewBox="0 0 15.5 15"><rect x="0" y="0" width="15.5" height="15" fill="#f6a033"/><rect x="2.7" y="2.7" width="7.5" height="9.6" fill="none" stroke="#fff" stroke-width="1" stroke-dasharray="1.2 0.6"/><path d="M6 7.5 L13 7.5 M10.8 5.3 L13 7.5 L10.8 9.7" fill="none" stroke="#fff" stroke-width="1.1"/></svg><div style="position:absolute;left:1349px;top:194px;width:143px;height:258px;border-radius:9px;box-shadow:0 6px 22px rgba(0,0,0,0.16),0 1px 4px rgba(0,0,0,0.10);background:#dedede;border:1px solid #b9b6b6;box-sizing:border-box;overflow:hidden"><div style="position:absolute;left:0;top:0;width:143px;height:9px;background:#d9d6d6;border-bottom:1px solid #c5c2c2"></div><div style="position:absolute;left:0;top:245px;width:143px;height:13px;background:#d2d0d0;border-top:1px solid #aaa7a7"></div></div><div style="position:absolute;left:1369.2px;top:215px;width:98.3px;height:213px;border-radius:9px;background:#fff"></div><div style="position:absolute;left:1391px;top:215px;width:55.3px;height:7.6px;border-radius:0 0 5px 5px;background:#000"></div><div style="position:absolute;left:1390.1px;top:306.5px;width:57.5px;height:29.7px;background:#b7cbe4"></div><div style="position:absolute;left:1410.25px;top:319.61px;font-size:4px;line-height:4px;font-weight:700;color:#fff;white-space:pre;z-index:5">AppLogo</div><div style="position:absolute;left:940px;top:214.3px;width:400px;height:861px;border-radius:44px;background:#fff;border:2px solid #2a2a2a;box-sizing:border-box"></div><svg style="position:absolute;left:1020px;top:214px;" width="240" height="34" viewBox="0 0 240 34"><path d="M0 0.8 L4 0.8 Q7.5 0.8 8.5 5 Q9 8 9 9 Q10 31.5 35 32.5 L205 32.5 Q230 31.5 231 9 Q231 8 231.5 5 Q232.5 0.8 236 0.8 L240 0.8 L240 0 L0 0 Z" fill="#000"/></svg><div style="position:absolute;left:1069.25px;top:1063.25px;width:141.5px;height:4.8px;background:#000;border-radius:3px"></div><svg style="position:absolute;left:840px;top:628px;" width="100" height="35" viewBox="0 0 100 35"><defs><linearGradient id="ag" gradientUnits="userSpaceOnUse" x1="4" y1="0" x2="97" y2="0"><stop offset="0" stop-color="#888" stop-opacity="0"/><stop offset="0.45" stop-color="#888"/><stop offset="1" stop-color="#888"/></linearGradient></defs><path d="M4 17 L97 17" stroke="url(#ag)" stroke-width="2.3"/><path d="M81 1.7 L97.5 17 L81 32.7" fill="none" stroke="#888" stroke-width="2"/></svg><div style="position:absolute;left:1025.5px;top:584px;width:229px;height:121.5px;background:#b7cce4;border-top:1.5px solid #cdcdcd;border-left:1.5px solid #cdcdcd;border-right:1px solid #d5d5d5;border-bottom:1px solid #d5d5d5;box-sizing:border-box"></div><div style="position:absolute;left:1111.22px;top:638.79px;font-size:13px;line-height:13px;font-weight:700;color:#fff;white-space:pre;transform:scaleX(1.0262);transform-origin:0 0;z-index:5">AppLogo</div><div style="position:absolute;left:1021.0999999999999px;top:579.6px;width:9px;height:9px;background:#fff;border:2px solid #555;border-radius:1.5px;box-sizing:border-box"></div><div style="position:absolute;left:1021.0999999999999px;top:640.9px;width:9px;height:9px;background:#fff;border:2px solid #555;border-radius:1.5px;box-sizing:border-box"></div><div style="position:absolute;left:1021.0999999999999px;top:701.1px;width:9px;height:9px;background:#fff;border:2px solid #555;border-radius:1.5px;box-sizing:border-box"></div><div style="position:absolute;left:1135.3px;top:579.6px;width:9px;height:9px;background:#fff;border:2px solid #555;border-radius:1.5px;box-sizing:border-box"></div><div style="position:absolute;left:1135.3px;top:701.1px;width:9px;height:9px;background:#fff;border:2px solid #555;border-radius:1.5px;box-sizing:border-box"></div><div style="position:absolute;left:1250.0px;top:579.6px;width:9px;height:9px;background:#fff;border:2px solid #555;border-radius:1.5px;box-sizing:border-box"></div><div style="position:absolute;left:1250.0px;top:640.9px;width:9px;height:9px;background:#fff;border:2px solid #555;border-radius:1.5px;box-sizing:border-box"></div><div style="position:absolute;left:1250.0px;top:701.1px;width:9px;height:9px;background:#fff;border:2px solid #555;border-radius:1.5px;box-sizing:border-box"></div><svg style="position:absolute;left:772px;top:1128.7px;" width="17" height="16" viewBox="0 0 17 16"><rect x="0.7" y="0.7" width="15.6" height="14.6" rx="2.8" fill="none" stroke="#7a7a7a" stroke-width="1.3"/><rect x="3" y="3" width="3" height="10" rx="1" fill="#7a7a7a"/></svg><svg style="position:absolute;left:801.4px;top:1128px;" width="17.6" height="17.6" viewBox="0 0 17.6 17.6"><circle cx="8.8" cy="8.8" r="8.1" fill="none" stroke="#7a7a7a" stroke-width="1.3"/><circle cx="8.8" cy="4.5" r="1.2" fill="#7a7a7a"/><path d="M4.5 6.5 L13.1 6.5 M8.8 6.5 L8.8 10 M7 14 L8.8 10 L10.6 14" fill="none" stroke="#7a7a7a" stroke-width="1.2"/></svg><svg style="position:absolute;left:834.2px;top:1128px;" width="17.7" height="17.7" viewBox="0 0 17.7 17.7"><circle cx="8.85" cy="8.85" r="8.1" fill="none" stroke="#7a7a7a" stroke-width="1.4"/><path d="M8.85 0.75 A8.1 8.1 0 0 0 8.85 16.95 Z" fill="#7a7a7a"/><path d="M8.85 4.8 A4.05 4.05 0 0 1 8.85 12.9 Z" fill="#7a7a7a"/></svg><svg style="position:absolute;left:867.8px;top:1125.5px;" width="17.5" height="19.5" viewBox="0 0 17.5 19.5"><rect x="0.7" y="6.5" width="11.5" height="12.3" rx="1.5" fill="none" stroke="#7a7a7a" stroke-width="1.3"/><path d="M10 3 Q15.5 2.5 16 8 M8 3 L11 0.8 M8 3 L11 5.2" fill="none" stroke="#7a7a7a" stroke-width="1.2"/></svg><svg style="position:absolute;left:902.2px;top:1129px;" width="15.6" height="15.6" viewBox="0 0 15.6 15.6"><rect x="0.7" y="0.7" width="14.2" height="14.2" rx="1.5" fill="none" stroke="#c8c8c8" stroke-width="1.3"/><path d="M7.8 1 L7.8 15" stroke="#c8c8c8" stroke-width="1.3"/></svg><svg style="position:absolute;left:938px;top:1128px;" width="11.4" height="18.3" viewBox="0 0 11.4 18.3"><rect x="0.7" y="0.7" width="10" height="16.9" rx="2" fill="none" stroke="#7a7a7a" stroke-width="1.3"/><path d="M3.5 1.6 L7.9 1.6 M4 15.2 L7.4 15.2" stroke="#7a7a7a" stroke-width="1.2"/></svg><div style="position:absolute;left:967.68px;top:1129.30px;font-size:15px;line-height:15px;font-weight:400;color:#7d7d7d;white-space:pre;-webkit-text-stroke:0.15px currentColor;transform:scaleX(0.9409);transform-origin:0 0;z-index:5">iPhone 11</div><svg style="position:absolute;left:1086.8px;top:1127.2px;" width="18" height="17.6" viewBox="0 0 18 17.6"><circle cx="7" cy="7" r="6.2" fill="none" stroke="#7a7a7a" stroke-width="1.4"/><path d="M4 7 L10 7" stroke="#7a7a7a" stroke-width="1.4"/><path d="M11.5 11.5 L17 17" stroke="#7a7a7a" stroke-width="1.8" stroke-linecap="round"/></svg><div style="position:absolute;left:1124.26px;top:1128.90px;font-size:15px;line-height:15px;font-weight:400;color:#7d7d7d;white-space:pre;-webkit-text-stroke:0.15px currentColor;transform:scaleX(0.9817);transform-origin:0 0;z-index:5">76%</div><svg style="position:absolute;left:1172px;top:1127.2px;" width="18" height="17.6" viewBox="0 0 18 17.6"><circle cx="7" cy="7" r="6.2" fill="none" stroke="#7a7a7a" stroke-width="1.4"/><path d="M4 7 L10 7 M7 4 L7 10" stroke="#7a7a7a" stroke-width="1.4"/><path d="M11.5 11.5 L17 17" stroke="#7a7a7a" stroke-width="1.8" stroke-linecap="round"/></svg><svg style="position:absolute;left:1349.8px;top:1127.3px;" width="19.3" height="18.8" viewBox="0 0 19.3 18.8"><path d="M0.7 4 L0.7 0.7 L4 0.7 M15.3 0.7 L18.6 0.7 L18.6 4 M18.6 14.8 L18.6 18.1 L15.3 18.1 M4 18.1 L0.7 18.1 L0.7 14.8" fill="none" stroke="#7a7a7a" stroke-width="1.3"/><path d="M6.5 13 A4.8 4.8 0 1 1 10 14.4 M7.5 11.5 L6 14.2 L9 15.5" fill="none" stroke="#7a7a7a" stroke-width="1.3"/></svg><svg style="position:absolute;left:1383px;top:1127.3px;" width="19" height="19" viewBox="0 0 19 19"><path d="M0.8 0 L0.8 19" stroke="#7a7a7a" stroke-width="1.3"/><rect x="3" y="2.5" width="12" height="5.5" rx="1" fill="none" stroke="#7a7a7a" stroke-width="1.3"/><rect x="3" y="10.8" width="15.5" height="5.5" rx="1" fill="none" stroke="#7a7a7a" stroke-width="1.3"/></svg><svg style="position:absolute;left:1415.6px;top:1127.3px;" width="19.4" height="19" viewBox="0 0 19.4 19"><rect x="6" y="5.5" width="7.5" height="8" fill="none" stroke="#7a7a7a" stroke-width="1.3"/><path d="M9.7 0.7 L9.7 5.5 M7 0.7 L12.4 0.7 M9.7 13.5 L9.7 18.3 M7 18.3 L12.4 18.3 M0.7 9.5 L6 9.5 M0.7 7 L0.7 12 M13.5 9.5 L18.7 9.5 M18.7 7 L18.7 12" fill="none" stroke="#7a7a7a" stroke-width="1.2"/></svg><svg style="position:absolute;left:1448.8px;top:1127.3px;" width="19.3" height="19" viewBox="0 0 19.3 19"><path d="M9.65 4 L14 14.7 L5.3 14.7 Z" fill="none" stroke="#7a7a7a" stroke-width="1.3" stroke-linejoin="round"/><circle cx="9.65" cy="11" r="1.1" fill="#7a7a7a"/><path d="M0.7 9.5 L4.5 9.5 M0.7 7 L0.7 12 M14.8 9.5 L18.6 9.5 M18.6 7 L18.6 12" fill="none" stroke="#7a7a7a" stroke-width="1.2"/></svg><svg style="position:absolute;left:1484.5px;top:1127.3px;" width="19" height="18.8" viewBox="0 0 19 18.8"><rect x="0.7" y="2.3" width="17.6" height="15.8" fill="none" stroke="#7a7a7a" stroke-width="1.3"/><path d="M9.5 0 L9.5 10 M5.5 6.5 L9.5 10.5 L13.5 6.5" fill="none" stroke="#7a7a7a" stroke-width="1.3"/></svg><svg style="position:absolute;left:432.6px;top:1168px;" width="18.2" height="11.4" viewBox="0 0 18.2 11.4"><path d="M2 0 L13.5 0 L18.2 5.7 L13.5 11.4 L2 11.4 Q0 11.4 0 9.4 L0 2 Q0 0 2 0 Z" fill="#0a7aff"/></svg><svg style="position:absolute;left:1485.2px;top:1165.4px;" width="16.1" height="16.4" viewBox="0 0 16.1 16.4"><rect x="0.7" y="0.7" width="14.7" height="15" rx="3" fill="none" stroke="#7a7a7a" stroke-width="1.3"/><rect x="2.8" y="10.5" width="10.5" height="2.6" rx="1" fill="#7a7a7a"/></svg><svg style="position:absolute;left:1563.4px;top:106.8px;" width="13.3" height="16.2" viewBox="0 0 13.3 16.2"><path d="M0.7 1.5 Q0.7 0.7 1.5 0.7 L8 0.7 L12.6 5.3 L12.6 14.7 Q12.6 15.5 11.8 15.5 L1.5 15.5 Q0.7 15.5 0.7 14.7 Z M8 0.7 L8 5.3 L12.6 5.3" fill="none" stroke="#6e6a6a" stroke-width="1.3" stroke-linejoin="round"/></svg><svg style="position:absolute;left:1599.2px;top:106.9px;" width="16.2" height="16.2" viewBox="0 0 16.2 16.2"><circle cx="8.1" cy="8.1" r="7.4" fill="none" stroke="#6e6a6a" stroke-width="1.3"/><path d="M7.5 3.5 L7.5 8.5 L4.5 8.5" fill="none" stroke="#6e6a6a" stroke-width="1.3"/></svg><svg style="position:absolute;left:1637.2px;top:106.9px;" width="16.6" height="16.6" viewBox="0 0 16.6 16.6"><circle cx="8.3" cy="8.3" r="7.6" fill="none" stroke="#6e6a6a" stroke-width="1.3"/><path d="M5.7 6.2 Q5.7 3.6 8.3 3.6 Q10.9 3.6 10.9 6 Q10.9 7.5 9.3 8.3 Q8.3 8.9 8.3 10.2" fill="none" stroke="#6e6a6a" stroke-width="1.3"/><circle cx="8.3" cy="12.6" r="0.9" fill="#6e6a6a"/></svg><svg style="position:absolute;left:1675.2px;top:108px;" width="16.6" height="14" viewBox="0 0 16.6 14"><rect x="0" y="0" width="16.6" height="14" rx="2" fill="#0a7aff"/><rect x="3" y="2.8" width="5.2" height="5" fill="#fff"/><path d="M9.8 3.3 L13.8 3.3 M9.8 5.4 L13.8 5.4 M9.8 7.5 L13.8 7.5 M3 10.6 L13.8 10.6" stroke="#fff" stroke-width="1.1"/></svg><svg style="position:absolute;left:1713.8px;top:106.5px;" width="16.2" height="16.5" viewBox="0 0 16.2 16.5"><path d="M0 1.8 L16.2 1.8 M0 8.2 L16.2 8.2 M0 14.6 L16.2 14.6" stroke="#6e6a6a" stroke-width="1.2"/><circle cx="11.5" cy="1.8" r="1.5" fill="#f3eeee" stroke="#6e6a6a" stroke-width="1.2"/><circle cx="2.7" cy="8.2" r="1.5" fill="#f3eeee" stroke="#6e6a6a" stroke-width="1.2"/><circle cx="11.5" cy="14.6" r="1.5" fill="#f3eeee" stroke="#6e6a6a" stroke-width="1.2"/></svg><svg style="position:absolute;left:1751.4px;top:108.2px;" width="16" height="14.8" viewBox="0 0 16 14.8"><path d="M0.7 0.7 L15.3 14.1 L0.7 14.1 Z" fill="none" stroke="#6e6a6a" stroke-width="1.3" stroke-linejoin="round"/><path d="M3.5 7.5 L8.5 11.4 L3.5 11.4 Z" fill="none" stroke="#6e6a6a" stroke-width="1.1"/></svg><svg style="position:absolute;left:1789.8px;top:106.9px;" width="16.2" height="16.2" viewBox="0 0 16.2 16.2"><path d="M13.3 3.1 A6.9 6.9 0 1 0 13.3 13.1" fill="none" stroke="#6e6a6a" stroke-width="1.4"/><circle cx="8.1" cy="8.1" r="2.7" fill="#6e6a6a"/><path d="M8.1 8.1 L16 8.1" stroke="#6e6a6a" stroke-width="1.4"/></svg><div style="position:absolute;left:1527.67px;top:140.90px;font-size:15px;line-height:15px;font-weight:700;color:#757272;white-space:pre;transform:scaleX(1.0491);transform-origin:0 0;z-index:5">Custom Class</div><div style="position:absolute;left:1567.8px;top:165.6px;width:278.8px;height:62.2px;border:2px solid #fb2a17;box-sizing:border-box;z-index:8"></div><div style="position:absolute;left:1586.74px;top:176.45px;font-size:14px;line-height:14px;font-weight:400;color:#363333;white-space:pre;-webkit-text-stroke:0.35px currentColor;transform:scaleX(0.9435);transform-origin:0 0;z-index:5">Class</div><div style="position:absolute;left:1626.6px;top:171.4px;width:212.8px;height:20px;background:#fff;border-radius:5px;box-shadow:0 0.5px 1.5px rgba(0,0,0,0.3)"></div><div style="position:absolute;left:1630.90px;top:173.90px;font-size:15px;line-height:15px;font-weight:400;color:#222;white-space:pre;-webkit-text-stroke:0.35px currentColor;transform:scaleX(0.9819);transform-origin:0 0;z-index:5">AppLogo</div><svg style="position:absolute;left:1801.9px;top:175.4px;" width="12.4" height="12.4" viewBox="0 0 12.4 12.4"><circle cx="6.2" cy="6.2" r="6.2" fill="#7d7d7d"/><path d="M3 6.2 L9 6.2 M6.5 3.5 L9.2 6.2 L6.5 8.9" fill="none" stroke="#fff" stroke-width="1.3"/></svg><div style="position:absolute;left:1822.2px;top:173.7px;width:15px;height:15px;background:linear-gradient(#3a95fb,#0a73f0);border-radius:4px"></div><svg style="position:absolute;left:1826.7px;top:178.8px;" width="6" height="5" viewBox="0 0 6 5"><path d="M0.7 0.9 L3 3.6 L5.3 0.9" fill="none" stroke="#fff" stroke-width="1.3"/></svg><div style="position:absolute;left:1574.18px;top:203.95px;font-size:14px;line-height:14px;font-weight:400;color:#363333;white-space:pre;-webkit-text-stroke:0.35px currentColor;transform:scaleX(0.9962);transform-origin:0 0;z-index:5">Module</div><div style="position:absolute;left:1623.1px;top:195.5px;width:220px;height:26.3px;border-radius:7px;background:#8fb2ee"></div><div style="position:absolute;left:1627px;top:199.5px;width:211.8px;height:18.9px;border-radius:4px;background:#fff"></div><div style="position:absolute;left:1630.18px;top:201.60px;font-size:15px;line-height:15px;font-weight:400;color:#222;white-space:pre;-webkit-text-stroke:0.35px currentColor;transform:scaleX(0.9656);transform-origin:0 0;z-index:5">Guard</div><div style="position:absolute;left:1670px;top:200.5px;width:1.2px;height:17px;background:#111"></div><div style="position:absolute;left:1822.2px;top:202px;width:15px;height:14.6px;background:linear-gradient(#3a95fb,#0a73f0);border-radius:4px"></div><svg style="position:absolute;left:1826.7px;top:207px;" width="6" height="5" viewBox="0 0 6 5"><path d="M0.7 0.9 L3 3.6 L5.3 0.9" fill="none" stroke="#fff" stroke-width="1.3"/></svg><div style="position:absolute;left:1626px;top:229px;width:15px;height:15px;border-radius:3.5px;background:#fff;box-shadow:0 0 0 0.6px rgba(0,0,0,0.15),0 0.6px 1px rgba(0,0,0,0.15)"></div><div style="position:absolute;left:1644.95px;top:228.00px;font-size:15px;line-height:15px;font-weight:400;color:#363333;white-space:pre;-webkit-text-stroke:0.35px currentColor;z-index:5">Inherit Module From Target</div><div style="position:absolute;left:1528.9px;top:263px;width:310px;height:1px;background:#dad6d6"></div><div style="position:absolute;left:1527.22px;top:273.40px;font-size:15px;line-height:15px;font-weight:700;color:#757272;white-space:pre;transform:scaleX(1.1076);transform-origin:0 0;z-index:5">Identity</div><div style="position:absolute;left:1532.30px;top:308.67px;font-size:13.5px;line-height:13.5px;font-weight:400;color:#363333;white-space:pre;-webkit-text-stroke:0.35px currentColor;transform:scaleX(1.0156);transform-origin:0 0;z-index:5">Restoration ID</div><div style="position:absolute;left:1626.6px;top:305px;width:212.2px;height:20.6px;background:#fff;box-shadow:0 0.5px 1.2px rgba(0,0,0,0.28);"></div><div style="position:absolute;left:1528.9px;top:342.5px;width:310px;height:1px;background:#dad6d6"></div><div style="position:absolute;left:1527.33px;top:351.60px;font-size:15px;line-height:15px;font-weight:700;color:#757272;white-space:pre;transform:scaleX(1.0766);transform-origin:0 0;z-index:5">User Defined Runtime Attributes</div><div style="position:absolute;left:1529.5px;top:376.3px;width:309px;height:122px;background:#fff;border:1.3px solid #c9c6c6;box-sizing:border-box"></div><div style="position:absolute;left:1539.43px;top:387.70px;font-size:15px;line-height:15px;font-weight:400;color:#2a2a2a;white-space:pre;-webkit-text-stroke:0.35px currentColor;transform:scaleX(0.9723);transform-origin:0 0;z-index:5">Key Path</div><div style="position:absolute;left:1697.3px;top:385.8px;width:1px;height:19px;background:#dedede"></div><div style="position:absolute;left:1702.71px;top:387.70px;font-size:15px;line-height:15px;font-weight:400;color:#2a2a2a;white-space:pre;-webkit-text-stroke:0.35px currentColor;transform:scaleX(0.9691);transform-origin:0 0;z-index:5">Type</div><div style="position:absolute;left:1783.6px;top:385.8px;width:1px;height:19px;background:#dedede"></div><div style="position:absolute;left:1788.93px;top:387.70px;font-size:15px;line-height:15px;font-weight:400;color:#2a2a2a;white-space:pre;-webkit-text-stroke:0.35px currentColor;transform:scaleX(0.9479);transform-origin:0 0;z-index:5">Val...</div><div style="position:absolute;left:1531px;top:411.3px;width:306px;height:1px;background:#e4e4e4"></div><svg style="position:absolute;left:1536.3px;top:481px;" width="13.8" height="13" viewBox="0 0 13.8 13"><path d="M6.9 0 L6.9 13 M0 6.5 L13.8 6.5" stroke="#555" stroke-width="1.4"/></svg><svg style="position:absolute;left:1562px;top:486.8px;" width="13" height="2" viewBox="0 0 13 2"><path d="M0 1 L13 1" stroke="#bdbdbd" stroke-width="1.3"/></svg><div style="position:absolute;left:1528.9px;top:509.5px;width:310px;height:1px;background:#dad6d6"></div><div style="position:absolute;left:1527.26px;top:519.30px;font-size:15px;line-height:15px;font-weight:700;color:#757272;white-space:pre;transform:scaleX(1.0620);transform-origin:0 0;z-index:5">Document</div><div style="position:absolute;left:1586.29px;top:554.67px;font-size:13.5px;line-height:13.5px;font-weight:400;color:#363333;white-space:pre;-webkit-text-stroke:0.35px currentColor;transform:scaleX(1.0274);transform-origin:0 0;z-index:5">Label</div><div style="position:absolute;left:1626.6px;top:552px;width:212.2px;height:20.1px;background:#fff;box-shadow:0 0.5px 1.2px rgba(0,0,0,0.28);"></div><div style="position:absolute;left:1630.53px;top:553.40px;font-size:15px;line-height:15px;font-weight:400;color:#bfbbbb;white-space:pre;-webkit-text-stroke:0.15px currentColor;transform:scaleX(0.9968);transform-origin:0 0;z-index:5">Xcode Specific Label</div><svg style="position:absolute;left:1629.7px;top:585px;" width="9" height="8.6" viewBox="0 0 9 8.6"><path d="M0.7 0.7 L8.3 7.9 M8.3 0.7 L0.7 7.9" stroke="#333" stroke-width="1.4"/></svg><div style="position:absolute;left:1648.9px;top:583.5px;width:11px;height:10px;background:#f28d82;border-radius:2px;box-shadow:0 0.5px 1px rgba(0,0,0,0.2)"></div><div style="position:absolute;left:1672px;top:583.5px;width:11px;height:10px;background:#f6bf78;border-radius:2px;box-shadow:0 0.5px 1px rgba(0,0,0,0.2)"></div><div style="position:absolute;left:1695px;top:583.5px;width:11px;height:10px;background:#f5de82;border-radius:2px;box-shadow:0 0.5px 1px rgba(0,0,0,0.2)"></div><div style="position:absolute;left:1717.7px;top:583.5px;width:11px;height:10px;background:#c4dd82;border-radius:2px;box-shadow:0 0.5px 1px rgba(0,0,0,0.2)"></div><div style="position:absolute;left:1740.5px;top:583.5px;width:11px;height:10px;background:#8dbaf6;border-radius:2px;box-shadow:0 0.5px 1px rgba(0,0,0,0.2)"></div><div style="position:absolute;left:1763.2px;top:583.5px;width:11px;height:10px;background:#d6b7f2;border-radius:2px;box-shadow:0 0.5px 1px rgba(0,0,0,0.2)"></div><div style="position:absolute;left:1786px;top:583.5px;width:11px;height:10px;background:#d2d2d2;border-radius:2px;box-shadow:0 0.5px 1px rgba(0,0,0,0.2)"></div><div style="position:absolute;left:1562.38px;top:608.57px;font-size:13.5px;line-height:13.5px;font-weight:400;color:#363333;white-space:pre;-webkit-text-stroke:0.35px currentColor;transform:scaleX(1.0234);transform-origin:0 0;z-index:5">Object ID</div><div style="position:absolute;left:1628.00px;top:607.30px;font-size:15px;line-height:15px;font-weight:400;color:#2a2a2a;white-space:pre;-webkit-text-stroke:0.35px currentColor;transform:scaleX(1.0060);transform-origin:0 0;z-index:5">0vn-Vj-AE2</div><div style="position:absolute;left:1590.20px;top:633.67px;font-size:13.5px;line-height:13.5px;font-weight:400;color:#363333;white-space:pre;-webkit-text-stroke:0.35px currentColor;transform:scaleX(1.0192);transform-origin:0 0;z-index:5">Lock</div><div style="position:absolute;left:1626.6px;top:630px;width:213px;height:20.3px;background:#fff;border-radius:5px;box-shadow:0 0.5px 1.5px rgba(0,0,0,0.3)"></div><div style="position:absolute;left:1632.90px;top:632.40px;font-size:15px;line-height:15px;font-weight:400;color:#222;white-space:pre;-webkit-text-stroke:0.35px currentColor;transform:scaleX(1.0359);transform-origin:0 0;z-index:5">Inherited - (Nothing)</div><div style="position:absolute;left:1822.2px;top:632.6px;width:15px;height:15.4px;background:linear-gradient(#3a95fb,#0a73f0);border-radius:4px"></div><svg style="position:absolute;left:1826.5px;top:634.8px;" width="6.5" height="11" viewBox="0 0 6.5 11"><path d="M0.8 3.6 L3.25 1 L5.7 3.6 M0.8 7.4 L3.25 10 L5.7 7.4" fill="none" stroke="#fff" stroke-width="1.2"/></svg><div style="position:absolute;left:1535.19px;top:662.87px;font-size:13.5px;line-height:13.5px;font-weight:400;color:#363333;white-space:pre;-webkit-text-stroke:0.35px currentColor;transform:scaleX(1.0298);transform-origin:0 0;z-index:5">Localizer Hint</div><div style="position:absolute;left:1626.6px;top:659.2px;width:212.2px;height:20.6px;background:#fff;box-shadow:0 0.5px 1.2px rgba(0,0,0,0.28);"></div><div style="position:absolute;left:1630.16px;top:661.60px;font-size:15px;line-height:15px;font-weight:400;color:#bfbbbb;white-space:pre;-webkit-text-stroke:0.15px currentColor;transform:scaleX(0.9840);transform-origin:0 0;z-index:5">Comment For Localizer</div><div style="position:absolute;left:1528.9px;top:696.3px;width:310px;height:1px;background:#dad6d6"></div><div style="position:absolute;left:1527.90px;top:705.80px;font-size:15px;line-height:15px;font-weight:700;color:#757272;white-space:pre;transform:scaleX(1.0540);transform-origin:0 0;z-index:5">Accessibility</div><div style="position:absolute;left:1544.00px;top:737.47px;font-size:13.5px;line-height:13.5px;font-weight:400;color:#363333;white-space:pre;-webkit-text-stroke:0.35px currentColor;transform:scaleX(1.0244);transform-origin:0 0;z-index:5">Accessibility</div><div style="position:absolute;left:1626.6px;top:736.5px;width:15px;height:15px;border-radius:3.5px;background:#fff;box-shadow:0 0 0 0.6px rgba(0,0,0,0.15),0 0.6px 1px rgba(0,0,0,0.15)"></div><div style="position:absolute;left:1646.01px;top:736.20px;font-size:15px;line-height:15px;font-weight:400;color:#363333;white-space:pre;-webkit-text-stroke:0.35px currentColor;transform:scaleX(0.9910);transform-origin:0 0;z-index:5">Enabled</div><div style="position:absolute;left:1586.29px;top:764.07px;font-size:13.5px;line-height:13.5px;font-weight:400;color:#363333;white-space:pre;-webkit-text-stroke:0.35px currentColor;transform:scaleX(1.0274);transform-origin:0 0;z-index:5">Label</div><div style="position:absolute;left:1626.6px;top:760.6px;width:212.2px;height:20.6px;background:#fff;box-shadow:0 0.5px 1.2px rgba(0,0,0,0.28);"></div><div style="position:absolute;left:1629.69px;top:762.80px;font-size:15px;line-height:15px;font-weight:400;color:#bfbbbb;white-space:pre;-webkit-text-stroke:0.15px currentColor;transform:scaleX(1.0116);transform-origin:0 0;z-index:5">Label</div><div style="position:absolute;left:1594.48px;top:793.37px;font-size:13.5px;line-height:13.5px;font-weight:400;color:#363333;white-space:pre;-webkit-text-stroke:0.35px currentColor;transform:scaleX(1.0388);transform-origin:0 0;z-index:5">Hint</div><div style="position:absolute;left:1626.6px;top:789.8px;width:212.2px;height:20.6px;background:#fff;box-shadow:0 0.5px 1.2px rgba(0,0,0,0.28);"></div><div style="position:absolute;left:1629.68px;top:792.10px;font-size:15px;line-height:15px;font-weight:400;color:#bfbbbb;white-space:pre;-webkit-text-stroke:0.15px currentColor;transform:scaleX(1.0138);transform-origin:0 0;z-index:5">Hint</div><div style="position:absolute;left:1564.20px;top:822.57px;font-size:13.5px;line-height:13.5px;font-weight:400;color:#363333;white-space:pre;-webkit-text-stroke:0.35px currentColor;transform:scaleX(1.0684);transform-origin:0 0;z-index:5">Identifier</div><div style="position:absolute;left:1626.6px;top:819px;width:212.2px;height:20.1px;background:#fff;box-shadow:0 0.5px 1.2px rgba(0,0,0,0.28);"></div><div style="position:absolute;left:1629.49px;top:821.30px;font-size:15px;line-height:15px;font-weight:400;color:#bfbbbb;white-space:pre;-webkit-text-stroke:0.15px currentColor;transform:scaleX(1.0438);transform-origin:0 0;z-index:5">Identifier</div><div style="position:absolute;left:1528.9px;top:845.7px;width:310px;height:1px;background:#dad6d6"></div><div style="position:absolute;left:1586.43px;top:854.37px;font-size:13.5px;line-height:13.5px;font-weight:400;color:#363333;white-space:pre;-webkit-text-stroke:0.35px currentColor;z-index:5">Traits</div><div style="position:absolute;left:1626.6px;top:853.4px;width:15px;height:15px;border-radius:3.5px;background:#fff;box-shadow:0 0 0 0.6px rgba(0,0,0,0.15),0 0.6px 1px rgba(0,0,0,0.15)"></div><div style="position:absolute;left:1645.94px;top:853.20px;font-size:15px;line-height:15px;font-weight:400;color:#363333;white-space:pre;-webkit-text-stroke:0.35px currentColor;transform:scaleX(1.0497);transform-origin:0 0;z-index:5">Button</div><div style="position:absolute;left:1626.6px;top:876.26px;width:15px;height:15px;border-radius:3.5px;background:#0a7aff"></div><svg style="position:absolute;left:1629.6px;top:879.76px;" width="9" height="8" viewBox="0 0 9 8"><path d="M0.9 4 L3.5 6.8 L8.2 0.9" fill="none" stroke="#fff" stroke-width="1.9" stroke-linecap="round" stroke-linejoin="round"/></svg><div style="position:absolute;left:1645.86px;top:876.06px;font-size:15px;line-height:15px;font-weight:400;color:#363333;white-space:pre;-webkit-text-stroke:0.35px currentColor;transform:scaleX(0.9956);transform-origin:0 0;z-index:5">Image</div><div style="position:absolute;left:1626.6px;top:899.12px;width:15px;height:15px;border-radius:3.5px;background:#fff;box-shadow:0 0 0 0.6px rgba(0,0,0,0.15),0 0.6px 1px rgba(0,0,0,0.15)"></div><div style="position:absolute;left:1646.52px;top:898.92px;font-size:15px;line-height:15px;font-weight:400;color:#363333;white-space:pre;-webkit-text-stroke:0.35px currentColor;transform:scaleX(1.0117);transform-origin:0 0;z-index:5">Static Text</div><div style="position:absolute;left:1626.6px;top:921.98px;width:15px;height:15px;border-radius:3.5px;background:#fff;box-shadow:0 0 0 0.6px rgba(0,0,0,0.15),0 0.6px 1px rgba(0,0,0,0.15)"></div><div style="position:absolute;left:1646.54px;top:921.78px;font-size:15px;line-height:15px;font-weight:400;color:#363333;white-space:pre;-webkit-text-stroke:0.35px currentColor;transform:scaleX(0.9846);transform-origin:0 0;z-index:5">Search Field</div><div style="position:absolute;left:1626.6px;top:944.84px;width:15px;height:15px;border-radius:3.5px;background:#fff;box-shadow:0 0 0 0.6px rgba(0,0,0,0.15),0 0.6px 1px rgba(0,0,0,0.15)"></div><div style="position:absolute;left:1646.03px;top:944.64px;font-size:15px;line-height:15px;font-weight:400;color:#363333;white-space:pre;-webkit-text-stroke:0.35px currentColor;transform:scaleX(0.9787);transform-origin:0 0;z-index:5">Plays Sound</div><div style="position:absolute;left:1626.6px;top:967.7px;width:15px;height:15px;border-radius:3.5px;background:#fff;box-shadow:0 0 0 0.6px rgba(0,0,0,0.15),0 0.6px 1px rgba(0,0,0,0.15)"></div><div style="position:absolute;left:1646.03px;top:967.50px;font-size:15px;line-height:15px;font-weight:400;color:#363333;white-space:pre;-webkit-text-stroke:0.35px currentColor;transform:scaleX(0.9720);transform-origin:0 0;z-index:5">Keyboard Key</div><div style="position:absolute;left:1626.6px;top:990.56px;width:15px;height:15px;border-radius:3.5px;background:#fff;box-shadow:0 0 0 0.6px rgba(0,0,0,0.15),0 0.6px 1px rgba(0,0,0,0.15)"></div><div style="position:absolute;left:1646.54px;top:990.36px;font-size:15px;line-height:15px;font-weight:400;color:#363333;white-space:pre;-webkit-text-stroke:0.35px currentColor;transform:scaleX(0.9729);transform-origin:0 0;z-index:5">Summary Element</div><div style="position:absolute;left:1626.6px;top:1013.42px;width:15px;height:15px;border-radius:3.5px;background:#0a7aff"></div><svg style="position:absolute;left:1629.6px;top:1016.92px;" width="9" height="8" viewBox="0 0 9 8"><path d="M0.9 4 L3.5 6.8 L8.2 0.9" fill="none" stroke="#fff" stroke-width="1.9" stroke-linecap="round" stroke-linejoin="round"/></svg><div style="position:absolute;left:1646.07px;top:1013.22px;font-size:15px;line-height:15px;font-weight:400;color:#363333;white-space:pre;-webkit-text-stroke:0.35px currentColor;z-index:5">User Interaction Enabled</div><div style="position:absolute;left:1626.6px;top:1036.28px;width:15px;height:15px;border-radius:3.5px;background:#fff;box-shadow:0 0 0 0.6px rgba(0,0,0,0.15),0 0.6px 1px rgba(0,0,0,0.15)"></div><div style="position:absolute;left:1646.07px;top:1036.08px;font-size:15px;line-height:15px;font-weight:400;color:#363333;white-space:pre;-webkit-text-stroke:0.35px currentColor;z-index:5">Updates Frequently</div><div style="position:absolute;left:1626.6px;top:1059.14px;width:15px;height:15px;border-radius:3.5px;background:#fff;box-shadow:0 0 0 0.6px rgba(0,0,0,0.15),0 0.6px 1px rgba(0,0,0,0.15)"></div><div style="position:absolute;left:1646.53px;top:1058.94px;font-size:15px;line-height:15px;font-weight:400;color:#363333;white-space:pre;-webkit-text-stroke:0.35px currentColor;transform:scaleX(0.9964);transform-origin:0 0;z-index:5">Starts Media Session</div><div style="position:absolute;left:1626.6px;top:1082.0px;width:15px;height:15px;border-radius:3.5px;background:#fff;box-shadow:0 0 0 0.6px rgba(0,0,0,0.15),0 0.6px 1px rgba(0,0,0,0.15)"></div><div style="position:absolute;left:1647.20px;top:1081.80px;font-size:15px;line-height:15px;font-weight:400;color:#363333;white-space:pre;-webkit-text-stroke:0.35px currentColor;z-index:5">Adjustable</div><div style="position:absolute;left:1626.6px;top:1104.86px;width:15px;height:15px;border-radius:3.5px;background:#fff;box-shadow:0 0 0 0.6px rgba(0,0,0,0.15),0 0.6px 1px rgba(0,0,0,0.15)"></div><div style="position:absolute;left:1647.20px;top:1104.66px;font-size:15px;line-height:15px;font-weight:400;color:#363333;white-space:pre;-webkit-text-stroke:0.35px currentColor;transform:scaleX(1.0114);transform-origin:0 0;z-index:5">Allows Direct Interaction</div><div style="position:absolute;left:1626.6px;top:1127.72px;width:15px;height:15px;border-radius:3.5px;background:#fff;box-shadow:0 0 0 0.6px rgba(0,0,0,0.15),0 0.6px 1px rgba(0,0,0,0.15)"></div><div style="position:absolute;left:1646.47px;top:1127.52px;font-size:15px;line-height:15px;font-weight:400;color:#363333;white-space:pre;-webkit-text-stroke:0.35px currentColor;transform:scaleX(0.9711);transform-origin:0 0;z-index:5">Causes Page Turn</div><div style="position:absolute;left:1626.6px;top:1150.58px;width:15px;height:15px;border-radius:3.5px;background:#fff;box-shadow:0 0 0 0.6px rgba(0,0,0,0.15),0 0.6px 1px rgba(0,0,0,0.15)"></div><div style="position:absolute;left:1646.01px;top:1150.38px;font-size:15px;line-height:15px;font-weight:400;color:#363333;white-space:pre;-webkit-text-stroke:0.35px currentColor;transform:scaleX(0.9901);transform-origin:0 0;z-index:5">Header</div><div style="position:absolute;left:1738.3px;top:853.4px;width:15px;height:15px;border-radius:3.5px;background:#fff;box-shadow:0 0 0 0.6px rgba(0,0,0,0.15),0 0.6px 1px rgba(0,0,0,0.15)"></div><div style="position:absolute;left:1757.68px;top:853.20px;font-size:15px;line-height:15px;font-weight:400;color:#363333;white-space:pre;-webkit-text-stroke:0.35px currentColor;transform:scaleX(1.0142);transform-origin:0 0;z-index:5">Link</div><div style="position:absolute;left:1738.3px;top:876.2px;width:15px;height:15px;border-radius:3.5px;background:#fff;box-shadow:0 0 0 0.6px rgba(0,0,0,0.15),0 0.6px 1px rgba(0,0,0,0.15)"></div><div style="position:absolute;left:1758.22px;top:876.00px;font-size:15px;line-height:15px;font-weight:400;color:#363333;white-space:pre;-webkit-text-stroke:0.35px currentColor;transform:scaleX(1.0145);transform-origin:0 0;z-index:5">Selected</div><div style="position:absolute;left:1528.9px;top:1181.5px;width:310px;height:1px;background:#dad6d6"></div><div style="position:absolute;left:71px;top:47px;width:1778px;height:1.5px;background:#fcfafa;z-index:20"></div>
</div></body></html>
